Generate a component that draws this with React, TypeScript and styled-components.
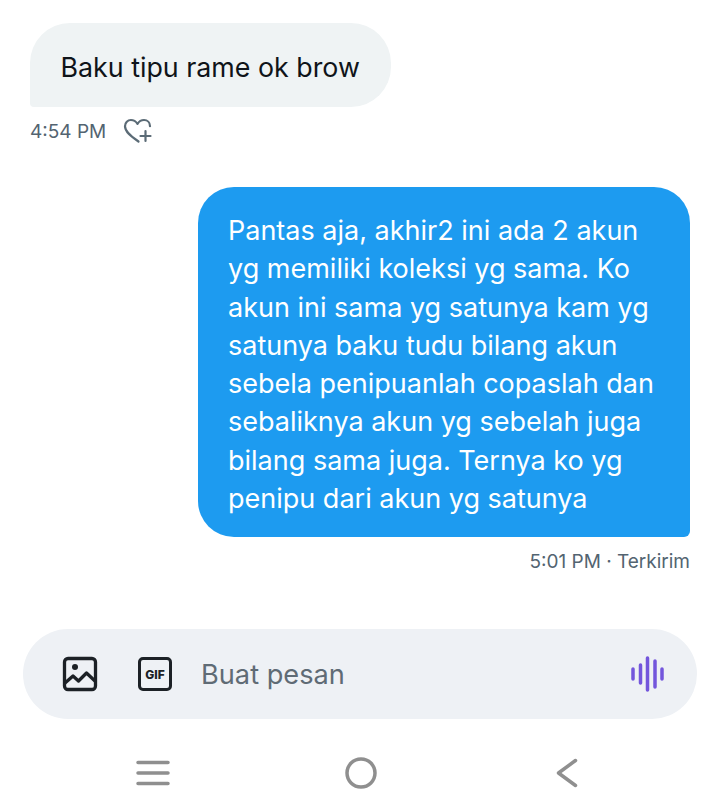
import * as React from "react";
import styled, { createGlobalStyle } from "styled-components";

const GlobalStyle = createGlobalStyle`
  html, body {
    margin: 0;
    padding: 0;
    background: #fff;
    font-family: Inter, "Noto Sans", sans-serif;
  }
`;

const lines = [
  "Pantas aja, akhir2 ini ada 2 akun",
  "yg memiliki koleksi yg sama. Ko",
  "akun ini sama yg satunya kam yg",
  "satunya baku tudu bilang akun",
  "sebela penipuanlah copaslah dan",
  "sebaliknya akun yg sebelah juga",
  "bilang sama juga. Ternya ko yg",
  "penipu dari akun yg satunya",
];

export default function App() {
  return (
    <Screen>
      <GlobalStyle />
      <Thread>
        <ReceivedBubble>Baku tipu rame ok brow</ReceivedBubble>
        <ReceivedMeta>
          <span>4:54 PM</span>
          <svg width="30" height="26" viewBox="0 0 30 26" fill="none" stroke="#5b6b76" strokeWidth="2.2" strokeLinecap="round" strokeLinejoin="round">
            <path d="M15.5 23.5C10 19.5 2 14.5 2 8.2 2 4.5 4.8 2 7.9 2c2.900 0 5 1.500 6.600 3.800C16 3.500 18.200 2 21 2c3.300 0 6 2.500 6 6.200" />
            <path d="M22.500 13v10M17.500 18h10" />
          </svg>
        </ReceivedMeta>
        <SentBubble>
          {lines.map((line) => (
            <div key={line}>{line}</div>
          ))}
        </SentBubble>
        <SentMeta>5:01 PM · Terkirim</SentMeta>
      </Thread>
      <Composer>
        <svg width="36" height="36" viewBox="0 0 36 36" fill="none" stroke="#1c2126" strokeWidth="3.3" strokeLinejoin="round">
          <rect x="2.500" y="2.500" width="31" height="31" rx="3.500" />
          <circle cx="13" cy="11" r="3" fill="#1c2126" stroke="none" />
          <path d="M3 27l8-7 5.500 5 8-8 8.500 8" />
        </svg>
        <GifIcon>GIF</GifIcon>
        <Placeholder>Buat pesan</Placeholder>
        <svg width="36" height="36" viewBox="0 0 36 36" fill="none" stroke="#7356dc" strokeWidth="3.500" strokeLinecap="round">
          <path d="M3 13v10M10.500 9v18M17.500 2v32M25 5v26M32 13v10" />
        </svg>
      </Composer>
      <NavBar>
        <svg width="34" height="28" viewBox="0 0 34 28" fill="none" stroke="#8f8f8f" strokeWidth="3.500" strokeLinecap="round">
          <path d="M2 3.500h30M2 14h30M2 24.500h30" />
        </svg>
        <svg width="32" height="32" viewBox="0 0 32 32" fill="none" stroke="#8f8f8f" strokeWidth="3.500">
          <circle cx="16" cy="16" r="14" />
        </svg>
        <svg width="27" height="30" viewBox="0 0 27 30" fill="none" stroke="#8f8f8f" strokeWidth="3.500" strokeLinecap="round" strokeLinejoin="round">
          <path d="M24.500 2.500L7.500 15l17 12.500" />
        </svg>
      </NavBar>
    </Screen>
  );
}

const Screen = styled.div`
  width: 720px;
  height: 812px;
  overflow: hidden;
  display: flex;
  flex-direction: column;
  background: #fff;
`;

const Thread = styled.div`
  display: flex;
  flex-direction: column;
  height: 629px;
  padding: 23px 30px 0;
  box-sizing: border-box;
`;

const ReceivedBubble = styled.div`
  align-self: flex-start;
  box-sizing: border-box;
  width: 361px;
  height: 84px;
  padding: 3px 0 0 30.500px;
  display: flex;
  align-items: center;
  background: #eff3f4;
  border-radius: 40px 40px 40px 4px;
  color: #0f1419;
  font-size: 26.800px;
  white-space: nowrap;
`;

const ReceivedMeta = styled.div`
  display: flex;
  align-items: center;
  gap: 17px;
  height: 26px;
  margin-top: 11px;
  color: #536471;
  font-size: 19px;
`;

const SentBubble = styled.div`
  align-self: flex-end;
  box-sizing: border-box;
  width: 492px;
  height: 350px;
  margin-top: 43px;
  padding: 25px 0 0 30px;
  background: #1d9bf0;
  border-radius: 36px 36px 6px 36px;
  color: #fff;
  font-size: 27px;
  line-height: 38.300px;
  white-space: nowrap;
`;

const SentMeta = styled.div`
  align-self: flex-end;
  margin-top: 13px;
  color: #536471;
  font-size: 19px;
  line-height: 24px;
`;

const Composer = styled.div`
  display: flex;
  align-items: center;
  box-sizing: border-box;
  width: 674px;
  height: 90px;
  margin-left: 23px;
  padding: 0 31px 0 39px;
  background: #eef1f5;
  border-radius: 45px;
`;

const GifIcon = styled.div`
  display: flex;
  align-items: center;
  justify-content: center;
  box-sizing: border-box;
  width: 34px;
  height: 34px;
  margin-left: 40px;
  border: 3.500px solid #1c2126;
  border-radius: 5px;
  color: #1c2126;
  font-size: 12px;
  font-weight: 800;
`;

const Placeholder = styled.div`
  flex: 1;
  margin-left: 29px;
  color: #5f6b75;
  font-size: 27.200px;
`;

const NavBar = styled.div`
  display: flex;
  align-items: center;
  justify-content: space-between;
  height: 88px;
  padding: 20px 142px 0 136px;
  box-sizing: border-box;
`;
